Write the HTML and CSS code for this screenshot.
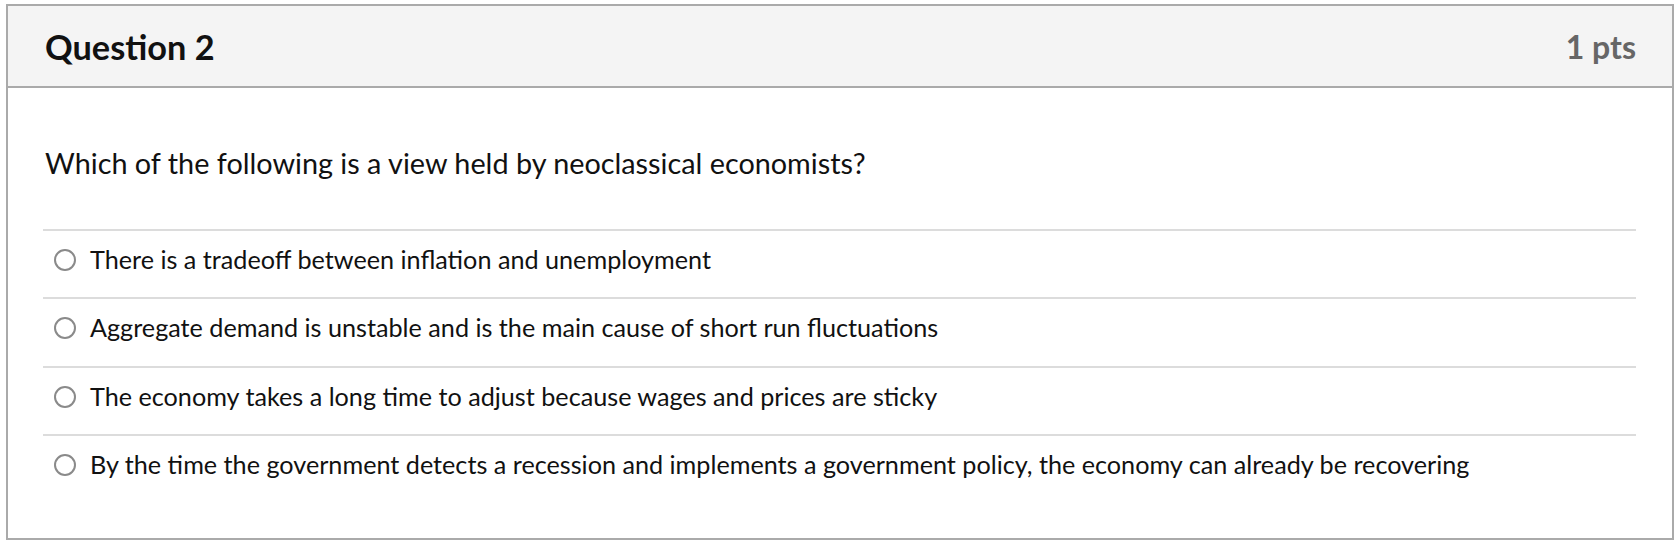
FILE: index.html
```html
<!DOCTYPE html>
<html>
<head>
<meta charset="utf-8">
<link rel="stylesheet" href="styles.css">
</head>
<body>
<div class="question">
  <div class="q-header">
    <h2 class="q-title">Question 2</h2>
    <span class="q-points">1 pts</span>
  </div>
  <div class="q-body">
    <p class="q-text">Which of the following is a view held by neoclassical economists?</p>
    <div class="answers">
      <label class="answer"><span class="radio"></span><span class="answer-text">There is a tradeoff between inflation and unemployment</span></label>
      <label class="answer"><span class="radio"></span><span class="answer-text">Aggregate demand is unstable and is the main cause of short run fluctuations</span></label>
      <label class="answer"><span class="radio"></span><span class="answer-text">The economy takes a long time to adjust because wages and prices are sticky</span></label>
      <label class="answer"><span class="radio"></span><span class="answer-text">By the time the government detects a recession and implements a government policy, the economy can already be recovering</span></label>
    </div>
  </div>
</div>
</body>
</html>
```
FILE: styles.css
```css
html, body {
  margin: 0;
  padding: 0;
  background: #ffffff;
}
body {
  padding: 4px 2px 0 6px;
  font-family: Lato, "Open Sans", sans-serif;
  color: #111111;
}
.question {
  border: 2px solid #aaaaaa;
  width: 1664px;
}
.q-header {
  display: flex;
  align-items: center;
  justify-content: space-between;
  height: 80px;
  padding: 0 36px 0 37px;
  background: #f4f4f4;
  border-bottom: 2px solid #aaaaaa;
}
.q-title {
  margin: 0;
  font-size: 34.3px;
  font-weight: 700;
  color: #111111;
}
.q-points {
  font-size: 32px;
  font-weight: 700;
  color: #666666;
}
.q-body {
  padding: 56px 36px 36px 35px;
}
.q-text {
  margin: 0 0 46px 2px;
  font-size: 28.8px;
  line-height: 39px;
}
.answers {
  display: flex;
  flex-direction: column;
}
.answer {
  display: flex;
  align-items: center;
  border-top: 2px solid #dcdcdc;
  padding: 10px 0 20px 11px;
  height: 36px;
  font-size: 25.2px;
  line-height: 36px;
}
.answer:nth-child(2), .answer:nth-child(3) {
  height: 36.5px;
}
.radio {
  flex: none;
  width: 18px;
  height: 18px;
  border: 2px solid #8a8a8a;
  border-radius: 50%;
  margin-right: 14px;
  margin-top: 2px;
}
.answer-text {
  color: #111111;
}
```
